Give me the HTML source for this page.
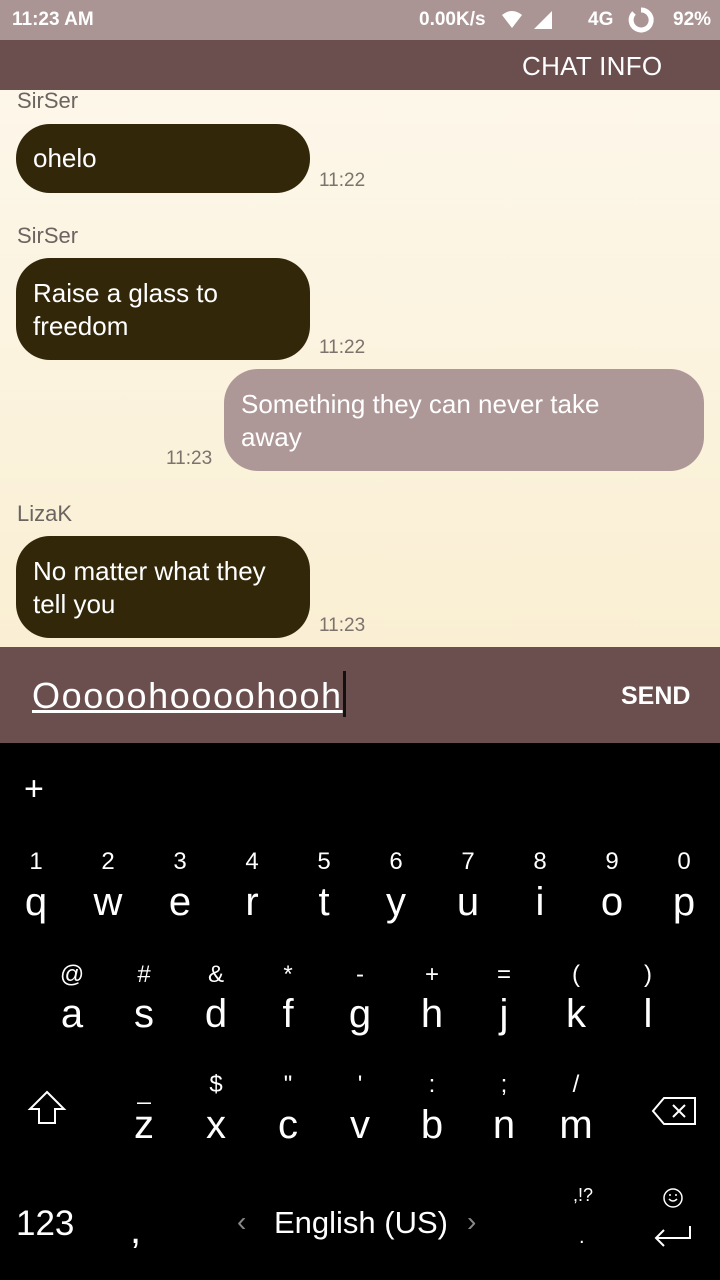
<!DOCTYPE html><html><head><style>
*{margin:0;padding:0;box-sizing:border-box}
body{width:720px;height:1280px;position:relative;overflow:hidden;font-family:"Liberation Sans",sans-serif;background:#000}
.a{position:absolute}
.sb{top:0;left:0;width:720px;height:40px;background:#ab9594;color:#fff;font-weight:bold;font-size:19px}
.tb{top:40px;left:0;width:720px;height:50px;background:#6b4f4e;color:#fff;font-size:26px}
.chat{top:90px;left:0;width:720px;height:557px;background:linear-gradient(#fdf7ea,#faefd3)}
.nm{color:#6b6460;font-size:22px;left:17px}
.bub{background:#33270a;color:#fff;font-size:26px;border-radius:34px;left:16px;width:294px;padding:0 17px;line-height:33px;white-space:nowrap}
.me{background:#ae9797;color:#fff;font-size:26px;border-radius:34px;left:224px;width:480px;padding:0 17px;line-height:33px;white-space:nowrap}
.t{color:#7b736c;font-size:19px}
.ib{top:647px;left:0;width:720px;height:96px;background:#6b4f4e;color:#fff}
.k{color:#fff;font-size:40px;width:60px;text-align:center;margin-left:-30px}
.s{color:#fff;font-size:24px;width:60px;text-align:center;margin-left:-30px}
</style></head><body>
<div class="a sb"><span class="a" style="left:12px;top:9px">11:23 AM</span><span class="a" style="left:419px;top:9px">0.00K/s</span>
<svg class="a" style="left:500px;top:9px" width="56" height="22"><path d="M2 6 Q12 -2 22 6 L12 19 Z" fill="#fff"/><path d="M34 20 L52 2 L52 20Z" fill="#fff"/></svg>
<span class="a" style="left:588px;top:9px">4G</span>
<svg class="a" style="left:626px;top:5px" width="30" height="30"><path d="M15 5 A10 10 0 1 1 8 8" fill="none" stroke="#fff" stroke-width="5"/></svg>
<span class="a" style="left:673px;top:9px">92%</span></div>
<div class="a tb"><span class="a" style="left:522px;top:11px;letter-spacing:0.3px">CHAT INFO</span></div>
<div class="a chat">
<div class="a nm" style="top:-2px">SirSer</div>
<div class="a bub" style="top:34px;height:69px;padding-top:18px">ohelo</div>
<div class="a t" style="left:319px;top:80px">11:22</div>
<div class="a nm" style="top:133px">SirSer</div>
<div class="a bub" style="top:168px;height:102px;padding-top:19px">Raise a glass to<br>freedom</div>
<div class="a t" style="left:319px;top:247px">11:22</div>
<div class="a me" style="top:279px;height:102px;padding-top:19px">Something they can never take<br>away</div>
<div class="a t" style="left:166px;top:358px">11:23</div>
<div class="a nm" style="top:411px">LizaK</div>
<div class="a bub" style="top:446px;height:102px;padding-top:19px">No matter what they<br>tell you</div>
<div class="a t" style="left:319px;top:525px">11:23</div>
</div>
<div class="a ib"><span class="a" style="left:32px;top:28px;font-size:36px;letter-spacing:1.6px;text-decoration:underline;white-space:nowrap">Ooooohoooohooh</span><span class="a" style="left:343px;top:24px;width:3px;height:46px;background:#111"></span><span class="a" style="left:621px;top:35px;font-size:25px;font-weight:bold">SEND</span></div>
<div class="a" style="left:24px;top:770px;color:#fff;font-size:34px">+</div>
<div class="a s" style="left:36px;top:848px">1</div><div class="a s" style="left:108px;top:848px">2</div><div class="a s" style="left:180px;top:848px">3</div><div class="a s" style="left:252px;top:848px">4</div><div class="a s" style="left:324px;top:848px">5</div><div class="a s" style="left:396px;top:848px">6</div><div class="a s" style="left:468px;top:848px">7</div><div class="a s" style="left:540px;top:848px">8</div><div class="a s" style="left:612px;top:848px">9</div><div class="a s" style="left:684px;top:848px">0</div>
<div class="a k" style="left:36px;top:880px">q</div><div class="a k" style="left:108px;top:880px">w</div><div class="a k" style="left:180px;top:880px">e</div><div class="a k" style="left:252px;top:880px">r</div><div class="a k" style="left:324px;top:880px">t</div><div class="a k" style="left:396px;top:880px">y</div><div class="a k" style="left:468px;top:880px">u</div><div class="a k" style="left:540px;top:880px">i</div><div class="a k" style="left:612px;top:880px">o</div><div class="a k" style="left:684px;top:880px">p</div>
<div class="a s" style="left:72px;top:961px">@</div><div class="a s" style="left:144px;top:961px">#</div><div class="a s" style="left:216px;top:961px">&amp;</div><div class="a s" style="left:288px;top:961px">*</div><div class="a s" style="left:360px;top:961px">-</div><div class="a s" style="left:432px;top:961px">+</div><div class="a s" style="left:504px;top:961px">=</div><div class="a s" style="left:576px;top:961px">(</div><div class="a s" style="left:648px;top:961px">)</div>
<div class="a k" style="left:72px;top:992px">a</div><div class="a k" style="left:144px;top:992px">s</div><div class="a k" style="left:216px;top:992px">d</div><div class="a k" style="left:288px;top:992px">f</div><div class="a k" style="left:360px;top:992px">g</div><div class="a k" style="left:432px;top:992px">h</div><div class="a k" style="left:504px;top:992px">j</div><div class="a k" style="left:576px;top:992px">k</div><div class="a k" style="left:648px;top:992px">l</div>
<div class="a s" style="left:144px;top:1078px">_</div><div class="a s" style="left:216px;top:1071px">$</div><div class="a s" style="left:288px;top:1071px">"</div><div class="a s" style="left:360px;top:1071px">'</div><div class="a s" style="left:432px;top:1071px">:</div><div class="a s" style="left:504px;top:1071px">;</div><div class="a s" style="left:576px;top:1071px">/</div>
<div class="a k" style="left:144px;top:1103px">z</div><div class="a k" style="left:216px;top:1103px">x</div><div class="a k" style="left:288px;top:1103px">c</div><div class="a k" style="left:360px;top:1103px">v</div><div class="a k" style="left:432px;top:1103px">b</div><div class="a k" style="left:504px;top:1103px">n</div><div class="a k" style="left:576px;top:1103px">m</div>
<svg class="a" style="left:26px;top:1090px" width="42" height="36"><path d="M21 2 L38 19 L29 19 L29 33 L13 33 L13 19 L4 19 Z" fill="none" stroke="#fff" stroke-width="2"/></svg>
<svg class="a" style="left:650px;top:1096px" width="48" height="32"><path d="M14 2 L45 2 L45 28 L14 28 L3 15 Z" fill="none" stroke="#fff" stroke-width="2"/><path d="M23 9 L35 21 M35 9 L23 21" stroke="#fff" stroke-width="2"/></svg>
<div class="a" style="left:16px;top:1204px;color:#fff;font-size:35px">123</div>
<div class="a" style="left:130px;top:1208px;color:#fff;font-size:40px">,</div>
<div class="a" style="left:237px;top:1206px;color:#888;font-size:28px">‹</div>
<div class="a" style="left:274px;top:1205px;color:#fff;font-size:31px">English (US)</div>
<div class="a" style="left:467px;top:1206px;color:#888;font-size:28px">›</div>
<div class="a" style="left:573px;top:1185px;color:#fff;font-size:18px">,!?</div>
<div class="a" style="left:579px;top:1226px;color:#fff;font-size:20px">.</div>
<svg class="a" style="left:660px;top:1185px" width="26" height="26"><circle cx="13" cy="13" r="9" fill="none" stroke="#fff" stroke-width="1.5"/><path d="M9 14 Q13 18 17 14" fill="none" stroke="#fff" stroke-width="1.5"/><circle cx="10" cy="10" r="1" fill="#fff"/><circle cx="16" cy="10" r="1" fill="#fff"/></svg>
<svg class="a" style="left:652px;top:1222px" width="42" height="30"><path d="M38 4 L38 16 L4 16 M12 8 L4 16 L12 24" fill="none" stroke="#fff" stroke-width="2"/></svg>
</body></html>
